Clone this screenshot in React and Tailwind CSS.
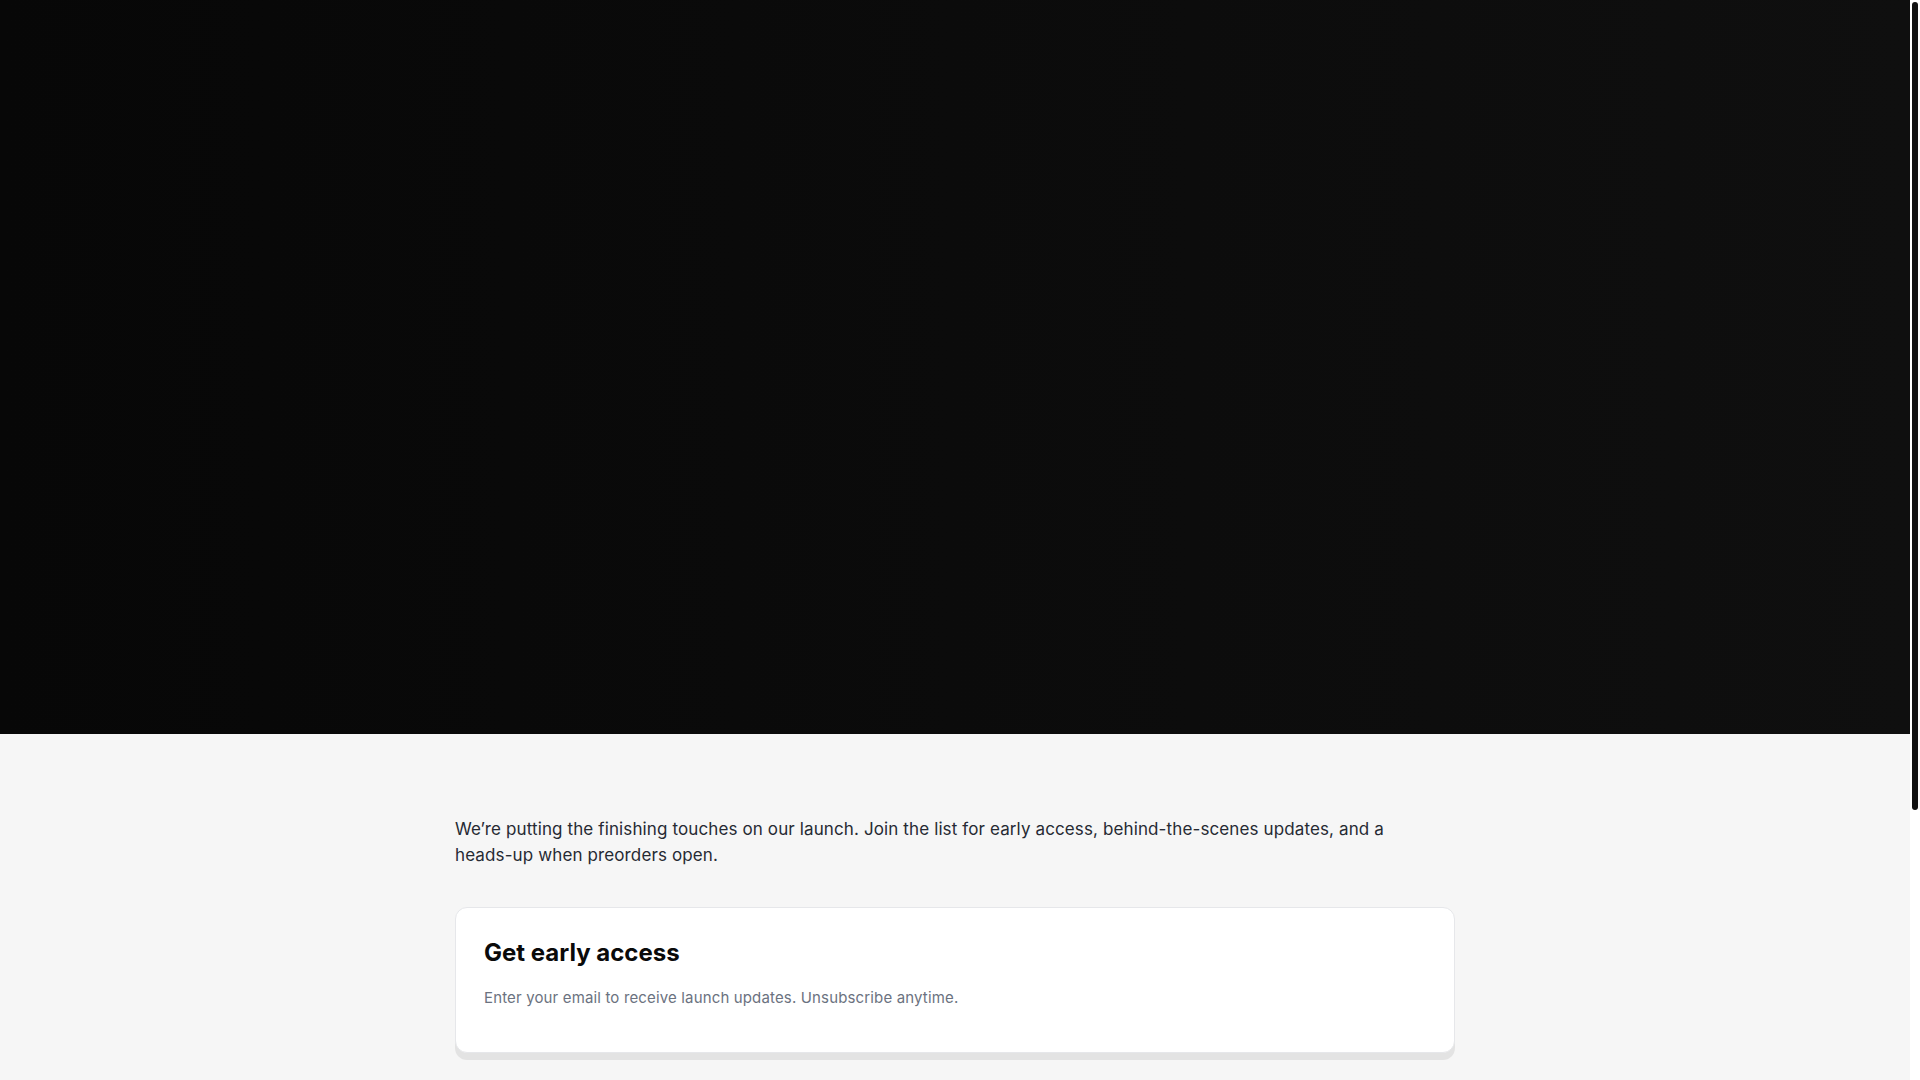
import React from "react";

const Hero = () => {
  // very dark product shot; only a soft left-to-right falloff is visible
  return (
    <section className="h-[734px] w-full shrink-0 bg-gradient-to-r from-[#070707] via-[#0b0b0b] to-[#0f0f0f]" />
  );
};

const SignupCard = () => {
  return (
    <div className="mt-[39px] rounded-xl border border-[#e6e7ea] bg-white px-7 pt-[29px] pb-[43px] shadow-[0_7px_0_0_rgba(0,0,0,0.075)]">
      <h2 className="text-2xl font-bold leading-8 text-[#0a0a0a]">
        Get early access
      </h2>
      <p className="mt-[18px] text-[15px] leading-[22px] tracking-[0.15px] text-[#6b7280]">
        Enter your email to receive launch updates. Unsubscribe anytime.
      </p>
    </div>
  );
};

const Scrollbar = () => {
  return (
    <div className="flex h-full w-[10px] shrink-0 flex-col bg-white p-[2px]">
      <div className="h-[808px] w-full rounded-full bg-[#111111]" />
    </div>
  );
};

export default function App() {
  return (
    <div
      className="flex h-screen w-full overflow-hidden bg-[#f6f6f6]"
      style={{ fontFamily: "Inter, 'Noto Sans', sans-serif" }}
    >
      <div className="flex min-w-0 flex-1 flex-col">
        <Hero />
        <main className="mx-auto w-full max-w-[1000px] pt-[82px] pb-24">
          <p className="max-w-[960px] text-[17px] leading-[26px] tracking-[0.12px] text-[#262a33]">
            We’re putting the finishing touches on our launch. Join the list for
            early access, behind-the-scenes updates, and a heads-up when
            preorders open.
          </p>
          <SignupCard />
        </main>
      </div>
      <Scrollbar />
    </div>
  );
}
